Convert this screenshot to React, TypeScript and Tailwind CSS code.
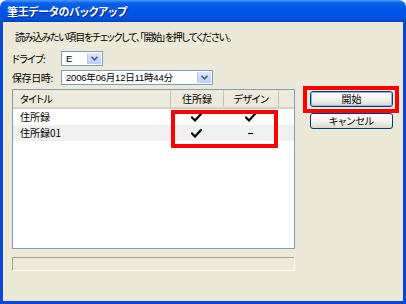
const jp = "font-['Noto_Sans_CJK_JP',sans-serif] [font-feature-settings:'palt']";

const Check = () => (
  <svg width="11" height="9" viewBox="0 0 11 9">
    <path d="M1 4.5 L4 7.5 L10 1" fill="none" stroke="#000" strokeWidth="2.2" strokeLinecap="square" />
  </svg>
);

const Arrow = () => (
  <div className="w-[14px] h-full flex items-center justify-center bg-gradient-to-b from-[#dfe8fd] to-[#b9cdf8] border-l border-[#b3c8f4] rounded-[1px]">
    <svg width="7" height="5" viewBox="0 0 7 5">
      <path d="M0.5 0.8 L3.5 3.8 L6.5 0.8" fill="none" stroke="#4d6185" strokeWidth="1.6" />
    </svg>
  </div>
);

const Combo = ({ value, width }: { value: string; width: string }) => (
  <div className={`${width} h-[15px] flex items-stretch bg-white border border-[#7f9db9] p-[1px]`}>
    <div className="flex-1 flex items-center pl-[3px] text-[9.5px] leading-none font-['Liberation_Sans','Noto_Sans_CJK_JP',sans-serif] tracking-[-0.2px]">
      {value}
    </div>
    <Arrow />
  </div>
);

const XpButton = ({ label, primary }: { label: string; primary?: boolean }) => (
  <div className="w-[83px] h-[16px] rounded-[3px] border border-[#003c74] bg-gradient-to-b from-[#ffffff] via-[#f4f4f0] to-[#dcd8cb]">
    <div
      className={`w-full h-full rounded-[2px] flex items-center justify-center text-[10px] leading-none ${
        primary ? 'border border-[#8cb4f2]' : ''
      }`}
    >
      {label}
    </div>
  </div>
);

const rows = [
  { title: '住所録', a: 'check', b: 'check' },
  { title: '住所録01', a: 'check', b: 'dash' },
];

export default function App() {
  return (
    <div className={`w-[406px] h-[304px] flex flex-col bg-white ${jp} text-black`}>
      {/* title bar */}
      <div className="h-[22px] rounded-t-[7px] bg-[linear-gradient(to_bottom,#4a9bff_0%,#0a61ec_14%,#0056e6_45%,#004fdd_85%,#003fc6_100%)] flex items-center pl-[7px]">
        <span className="text-white font-bold text-[11px] leading-none tracking-[-0.3px] [text-shadow:1px_1px_0_#0a2a80]">
          筆王データのバックアップ
        </span>
      </div>

      <div className="flex-1 bg-[#0848d8] px-[3px] pb-[3px]">
        <div className="h-full bg-[#ece9d8] relative">
          <div className="pt-[8px] pl-[12px] text-[10px] leading-[13px] tracking-[-1.2px]">
            読み込みたい項目をチェックして、「開始」を押してください。
          </div>

          <div className="flex pl-[9px] pt-[8px]">
            <div className="w-[283px] flex flex-col">
              <div className="flex items-center h-[15px]">
                <span className="w-[49px] text-[10px] leading-none tracking-[-0.8px]">ドライブ:</span>
                <Combo value="E" width="w-[42px]" />
              </div>
              <div className="flex items-center h-[15px] mt-[4px]">
                <span className="w-[49px] text-[10px] leading-none tracking-[-0.4px]">保存日時:</span>
                <Combo value="2006年06月12日11時44分" width="w-[152px]" />
              </div>

              {/* list view */}
              <div className="mt-[4px] h-[160px] bg-white border border-[#7f9db9] flex flex-col">
                <div className="h-[19px] flex bg-[#ebeadb] border-b-[2px] border-[#d6d2c2] text-[10px] leading-none">
                  <div className="w-[157px] flex items-center pl-[7px] tracking-[-0.6px]">タイトル</div>
                  <div className="w-[53px] flex items-center justify-center border-l border-[#c7c5b2]">住所録</div>
                  <div className="w-[55px] flex items-center justify-center border-l border-[#c7c5b2] tracking-[-0.5px]">デザイン</div>
                  <div className="flex-1 border-l border-[#c7c5b2]"></div>
                </div>
                {rows.map((r, i) => (
                  <div
                    key={r.title}
                    className={`h-[16px] flex items-center text-[10px] leading-none ${i === 1 ? 'bg-[#f0f0f0]' : ''}`}
                  >
                    <div className="w-[157px] pl-[7px]">{r.title}</div>
                    <div className="w-[53px] flex justify-center">{r.a === 'check' ? <Check /> : '–'}</div>
                    <div className="w-[55px] flex justify-center">
                      {r.b === 'check' ? <Check /> : <div className="w-[5px] h-[1px] bg-black"></div>}
                    </div>
                  </div>
                ))}
              </div>

              {/* progress bar */}
              <div className="mt-[8px] h-[14px] border border-t-[#a7a391] border-l-[#a7a391] border-b-[#fbfaf6] border-r-[#fbfaf6]"></div>
            </div>

            <div className="flex flex-col gap-[6px] pl-[15px] pt-[40px]">
              <XpButton label="開始" primary />
              <XpButton label="キャンセル" />
            </div>
          </div>

          {/* annotation boxes */}
          <div className="absolute left-[168px] top-[88px] w-[107px] h-[38px] border-[4px] border-[#ff0000]"></div>
          <div className="absolute left-[300px] top-[64px] w-[96px] h-[27px] border-[4px] border-[#ff0000]"></div>
        </div>
      </div>
    </div>
  );
}
